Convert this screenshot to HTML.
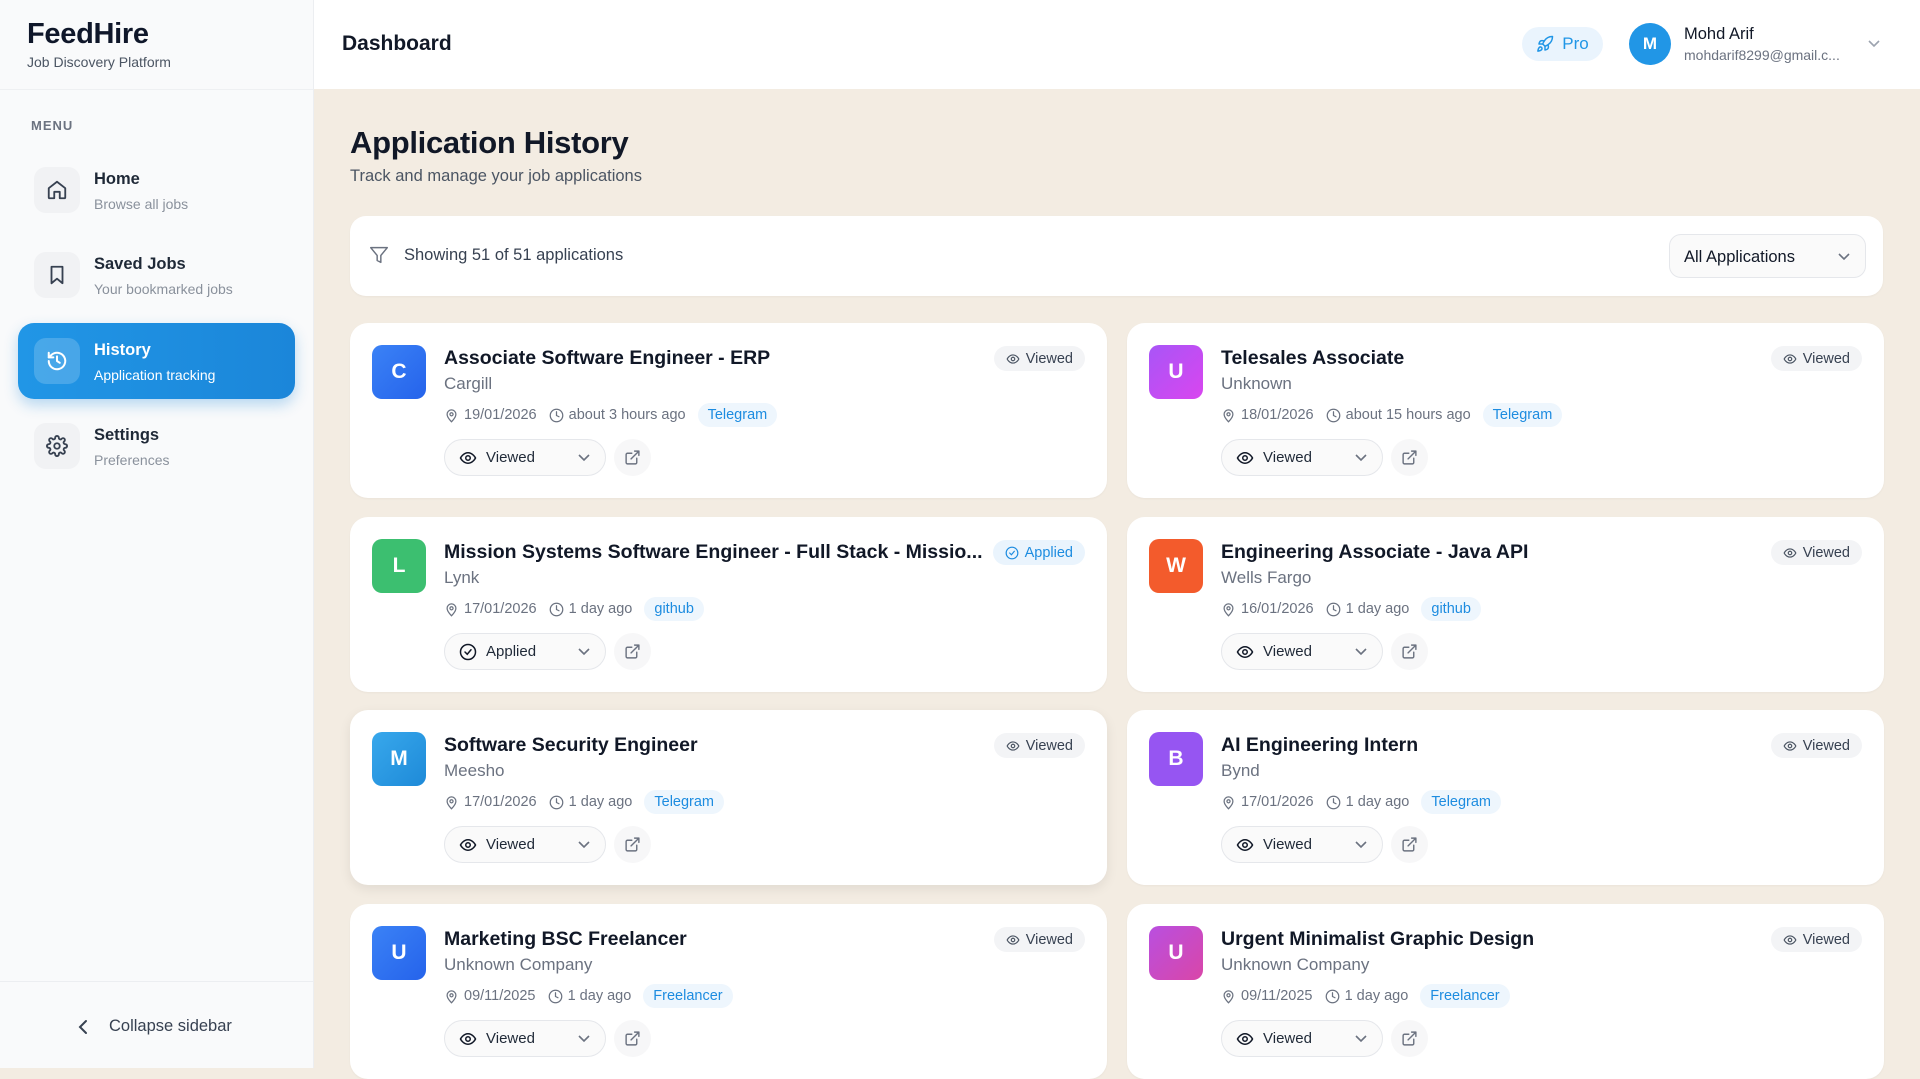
<!DOCTYPE html>
<html><head><meta charset="utf-8"><style>
*{box-sizing:border-box;margin:0;padding:0}
body{width:1920px;height:1068px;overflow:hidden;font-family:"Liberation Sans",sans-serif;background:#f3ece2;position:relative;color:#111827}
.sb{position:absolute;left:0;top:0;width:314px;height:1068px;background:#f9fafb;border-right:1px solid #eceef1}
.logo{position:absolute;left:27px;top:18px;font-size:29px;font-weight:700;color:#0f172a;letter-spacing:-0.3px}
.logosub{position:absolute;left:27px;top:54px;font-size:14px;color:#4b5563}
.sbline{position:absolute;left:0;top:89px;width:313px;border-top:1px solid #eef0f2}
.menu{position:absolute;left:31px;top:118px;font-size:13px;font-weight:700;color:#6b7280;letter-spacing:1px}
.nav{position:absolute;left:18px;width:277px;height:76px;border-radius:16px}
.nav .ic{position:absolute;left:16px;top:15px;width:46px;height:46px;border-radius:12px;background:#f1f2f4;display:flex;align-items:center;justify-content:center}
.nav .t{position:absolute;left:76px;top:18px;font-size:16.5px;font-weight:700;color:#1f2937}
.nav .s{position:absolute;left:76px;top:44px;font-size:14px;color:#8a919c}
.nav.act{background:linear-gradient(90deg,#2196e6,#1b86d9);box-shadow:0 6px 14px rgba(30,136,217,.3)}
.nav.act .ic{background:rgba(255,255,255,.18)}
.nav.act .t,.nav.act .s{color:#fff}
.coll{position:absolute;left:0;top:981px;width:313px;border-top:1px solid #eceef1;height:87px}
.coll span{position:absolute;left:109px;top:35px;font-size:16.5px;color:#374151}
.hdr{position:absolute;left:314px;top:0;width:1606px;height:89px;background:#fff}
.dash{position:absolute;left:28px;top:32px;font-size:21px;font-weight:700;color:#111827}
.pro{position:absolute;left:1208px;top:27px;width:81px;height:34px;border-radius:17px;background:#eaf4fd;color:#2196e6;font-size:17px;display:flex;align-items:center;justify-content:center;gap:8px}
.av{position:absolute;left:1315px;top:23px;width:42px;height:42px;border-radius:50%;background:#2196e6;color:#fff;font-weight:700;font-size:17px;display:flex;align-items:center;justify-content:center}
.nm{position:absolute;left:1370px;top:25px;font-size:16.5px;color:#111827}
.em{position:absolute;left:1370px;top:47px;font-size:14px;color:#6b7280}
h1{position:absolute;left:350px;top:125px;font-size:31px;font-weight:700;color:#111827;letter-spacing:-0.3px}
.sub{position:absolute;left:350px;top:167px;font-size:16.5px;color:#4b5563}
.fb{position:absolute;left:350px;top:216px;width:1533px;height:80px;background:#fff;border-radius:16px;box-shadow:0 1px 2px rgba(0,0,0,.04)}
.fb .txt{position:absolute;left:54px;top:30px;font-size:16.5px;color:#374151}
.dd{position:absolute;left:1319px;top:18px;width:197px;height:44px;border:1px solid #e5e7eb;border-radius:12px;background:#fafafa;font-size:16.5px;color:#111827;padding:13px 0 0 14px}
.card{position:absolute;width:757px;height:175px;background:#fff;border-radius:18px;box-shadow:0 1px 2px rgba(0,0,0,.04)}
.card .lg{position:absolute;left:22px;top:22px;width:54px;height:54px;border-radius:10px;color:#fff;font-weight:700;font-size:21px;display:flex;align-items:center;justify-content:center}
.card .ti{position:absolute;left:94px;top:24px;font-size:19.5px;font-weight:700;color:#111827;white-space:nowrap}
.card .co{position:absolute;left:94px;top:51px;font-size:17px;color:#6b7280}
.card .mt{position:absolute;left:94px;top:80px;font-size:14.5px;color:#6b7280;display:flex;align-items:center;height:24px;white-space:nowrap}
.mt svg{margin-right:5px}
.mt .tag{margin-left:12px;background:#eef6fd;color:#1d8ce0;border-radius:12px;padding:4px 10px;font-size:14.5px}
.card .bd{position:absolute;right:22px;top:23px;height:25px;border-radius:13px;background:#f3f4f6;color:#374151;font-size:14.5px;display:flex;align-items:center;padding:0 12px;gap:6px}
.card .bd.ap{background:#eaf4fd;color:#1d8ce0}
.card .st{position:absolute;left:94px;top:116px;width:162px;height:37px;border:1px solid #e5e7eb;border-radius:19px;background:#fafafa;font-size:15px;color:#1f2937;display:flex;align-items:center;padding-left:14px;gap:9px}
.st .chev{position:absolute;right:14px;top:13px}
.card .ex{position:absolute;left:264px;top:116px;width:37px;height:37px;border-radius:50%;background:#f7f7f8;display:flex;align-items:center;justify-content:center}
</style></head><body>
<div class="sb">
<div class="logo">FeedHire</div><div class="logosub">Job Discovery Platform</div>
<div class="sbline"></div>
<div class="menu">MENU</div>
<div class="nav" style="top:152px"><div class="ic"><svg width="22" height="22" viewBox="0 0 24 24" fill="none" stroke="#374151" stroke-width="2" stroke-linecap="round" stroke-linejoin="round"><path d="M3 10l9-7 9 7v10a1 1 0 0 1-1 1h-5v-7h-6v7H4a1 1 0 0 1-1-1z"/></svg></div><div class="t">Home</div><div class="s">Browse all jobs</div></div>
<div class="nav" style="top:237px"><div class="ic"><svg width="22" height="22" viewBox="0 0 24 24" fill="none" stroke="#374151" stroke-width="2" stroke-linejoin="round"><path d="M6 3h12v18l-6-5-6 5z"/></svg></div><div class="t">Saved Jobs</div><div class="s">Your bookmarked jobs</div></div>
<div class="nav act" style="top:323px"><div class="ic"><svg width="22" height="22" viewBox="0 0 24 24" fill="none" stroke="#fff" stroke-width="2.2" stroke-linecap="round" stroke-linejoin="round"><path d="M3 12a9 9 0 1 0 3-6.7L3 8"/><path d="M3 3v5h5"/><path d="M12 7v5l3 2"/></svg></div><div class="t">History</div><div class="s">Application tracking</div></div>
<div class="nav" style="top:408px"><div class="ic"><svg width="22" height="22" viewBox="0 0 24 24" fill="none" stroke="#374151" stroke-width="2"><circle cx="12" cy="12" r="3"/><path d="M19.4 15a1.7 1.7 0 0 0 .3 1.8l.1.1a2 2 0 1 1-2.8 2.8l-.1-.1a1.7 1.7 0 0 0-2.9 1.2V21a2 2 0 1 1-4 0v-.1a1.7 1.7 0 0 0-2.9-1.2l-.1.1a2 2 0 1 1-2.8-2.8l.1-.1A1.7 1.7 0 0 0 3 14H3a2 2 0 1 1 0-4h.1a1.7 1.7 0 0 0 1.2-2.9l-.1-.1a2 2 0 1 1 2.8-2.8l.1.1A1.7 1.7 0 0 0 10 3.1V3a2 2 0 1 1 4 0v.1a1.7 1.7 0 0 0 2.9 1.2l.1-.1a2 2 0 1 1 2.8 2.8l-.1.1a1.7 1.7 0 0 0 1.2 2.9H21a2 2 0 1 1 0 4h-.1a1.7 1.7 0 0 0-1.5 1z"/></svg></div><div class="t">Settings</div><div class="s">Preferences</div></div>
<div class="coll"><svg style="position:absolute;left:77px;top:37px" width="14" height="16" viewBox="0 0 14 16" fill="none" stroke="#374151" stroke-width="2" stroke-linecap="round"><path d="M9 2L3 8l6 6"/></svg><span>Collapse sidebar</span></div>
</div>
<div class="hdr">
<div class="dash">Dashboard</div>
<div class="pro"><svg width="18" height="18" viewBox="0 0 24 24" fill="none" stroke="#2196e6" stroke-width="2" stroke-linecap="round" stroke-linejoin="round"><path d="M4.5 16.5c-1.5 1.3-2 5-2 5s3.7-.5 5-2c.7-.8.7-2.1-.1-2.9a2.2 2.2 0 0 0-2.9-.1z"/><path d="M12 15l-3-3a22 22 0 0 1 2-4A12.9 12.9 0 0 1 22 2c0 2.7-.8 7.5-6 11a22 22 0 0 1-4 2z"/><path d="M9 12H4s.6-3 2-4c1.6-1.1 5 0 5 0M12 15v5s3-.6 4-2c1.1-1.6 0-5 0-5"/></svg>Pro</div>
<div class="av">M</div>
<div class="nm">Mohd Arif</div><div class="em">mohdarif8299@gmail.c...</div>
<svg style="position:absolute;left:1553px;top:39px" width="14" height="10" viewBox="0 0 14 10" fill="none" stroke="#9ca3af" stroke-width="1.6"><path d="M2 2l5 5 5-5"/></svg>
</div>
<h1>Application History</h1>
<div class="sub">Track and manage your job applications</div>
<div class="fb"><svg style="position:absolute;left:18px;top:28px" width="22" height="22" viewBox="0 0 24 24" fill="none" stroke="#6b7280" stroke-width="1.6" stroke-linejoin="round"><path d="M3 4h18l-7 8.5V20l-4-2v-5.5z"/></svg><div class="txt">Showing 51 of 51 applications</div>
<div class="dd">All Applications<svg style="position:absolute;right:14px;top:17px" width="14" height="10" viewBox="0 0 14 10" fill="none" stroke="#6b7280" stroke-width="1.6"><path d="M2 2l5 5 5-5"/></svg></div></div>

<svg width="0" height="0" style="position:absolute"><defs>
<symbol id="eye" viewBox="0 0 24 24"><g fill="none" stroke="currentColor" stroke-width="2"><path d="M2 12s3.5-7 10-7 10 7 10 7-3.5 7-10 7S2 12 2 12z"/><circle cx="12" cy="12" r="3"/></g></symbol>
<symbol id="chk" viewBox="0 0 24 24"><g fill="none" stroke="currentColor" stroke-width="2" stroke-linecap="round"><circle cx="12" cy="12" r="10"/><path d="M8 12l3 3 5-6"/></g></symbol>
<symbol id="pin" viewBox="0 0 24 24"><g fill="none" stroke="currentColor" stroke-width="2"><path d="M12 22s7-6.5 7-12a7 7 0 0 0-14 0c0 5.5 7 12 7 12z"/><circle cx="12" cy="10" r="2.5"/></g></symbol>
<symbol id="clk" viewBox="0 0 24 24"><g fill="none" stroke="currentColor" stroke-width="2" stroke-linecap="round"><circle cx="12" cy="12" r="10"/><path d="M12 6v6l4 2"/></g></symbol>
<symbol id="ext" viewBox="0 0 24 24"><g fill="none" stroke="currentColor" stroke-width="2" stroke-linecap="round" stroke-linejoin="round"><path d="M18 13v6a2 2 0 0 1-2 2H5a2 2 0 0 1-2-2V8a2 2 0 0 1 2-2h6"/><path d="M15 3h6v6M10 14L21 3"/></g></symbol>
<symbol id="chv" viewBox="0 0 14 10"><path d="M2 2l5 5 5-5" fill="none" stroke="currentColor" stroke-width="1.6"/></symbol>
</defs></svg>

<!-- cards -->
<div class="card" style="left:350px;top:323px"><div class="lg" style="background:linear-gradient(135deg,#3b82f6,#2563eb)">C</div><div class="ti">Associate Software Engineer - ERP</div><div class="co">Cargill</div><div class="mt"><svg width="15" height="15" color="#6b7280"><use href="#pin"/></svg>19/01/2026&nbsp;&nbsp;&nbsp;<svg width="15" height="15" color="#6b7280"><use href="#clk"/></svg>about 3 hours ago<span class="tag">Telegram</span></div><div class="bd"><svg width="14" height="14" color="#4b5563"><use href="#eye"/></svg>Viewed</div><div class="st"><svg width="18" height="18" color="#111827"><use href="#eye"/></svg>Viewed<svg class="chev" width="14" height="10" color="#6b7280"><use href="#chv"/></svg></div><div class="ex"><svg width="17" height="17" color="#6b7280"><use href="#ext"/></svg></div></div>

<div class="card" style="left:1127px;top:323px"><div class="lg" style="background:linear-gradient(135deg,#a855f7,#d946ef)">U</div><div class="ti">Telesales Associate</div><div class="co">Unknown</div><div class="mt"><svg width="15" height="15" color="#6b7280"><use href="#pin"/></svg>18/01/2026&nbsp;&nbsp;&nbsp;<svg width="15" height="15" color="#6b7280"><use href="#clk"/></svg>about 15 hours ago<span class="tag">Telegram</span></div><div class="bd"><svg width="14" height="14" color="#4b5563"><use href="#eye"/></svg>Viewed</div><div class="st"><svg width="18" height="18" color="#111827"><use href="#eye"/></svg>Viewed<svg class="chev" width="14" height="10" color="#6b7280"><use href="#chv"/></svg></div><div class="ex"><svg width="17" height="17" color="#6b7280"><use href="#ext"/></svg></div></div>

<div class="card" style="left:350px;top:517px"><div class="lg" style="background:#3cbf70">L</div><div class="ti">Mission Systems Software Engineer - Full Stack - Missio...</div><div class="co">Lynk</div><div class="mt"><svg width="15" height="15" color="#6b7280"><use href="#pin"/></svg>17/01/2026&nbsp;&nbsp;&nbsp;<svg width="15" height="15" color="#6b7280"><use href="#clk"/></svg>1 day ago<span class="tag">github</span></div><div class="bd ap"><svg width="14" height="14" color="#1d8ce0"><use href="#chk"/></svg>Applied</div><div class="st"><svg width="18" height="18" color="#111827"><use href="#chk"/></svg>Applied<svg class="chev" width="14" height="10" color="#6b7280"><use href="#chv"/></svg></div><div class="ex"><svg width="17" height="17" color="#6b7280"><use href="#ext"/></svg></div></div>

<div class="card" style="left:1127px;top:517px"><div class="lg" style="background:#f35b2c">W</div><div class="ti">Engineering Associate - Java API</div><div class="co">Wells Fargo</div><div class="mt"><svg width="15" height="15" color="#6b7280"><use href="#pin"/></svg>16/01/2026&nbsp;&nbsp;&nbsp;<svg width="15" height="15" color="#6b7280"><use href="#clk"/></svg>1 day ago<span class="tag">github</span></div><div class="bd"><svg width="14" height="14" color="#4b5563"><use href="#eye"/></svg>Viewed</div><div class="st"><svg width="18" height="18" color="#111827"><use href="#eye"/></svg>Viewed<svg class="chev" width="14" height="10" color="#6b7280"><use href="#chv"/></svg></div><div class="ex"><svg width="17" height="17" color="#6b7280"><use href="#ext"/></svg></div></div>

<div class="card" style="left:350px;top:710px;box-shadow:0 4px 12px rgba(0,0,0,.08)"><div class="lg" style="background:linear-gradient(135deg,#38a8ec,#1e8ad8)">M</div><div class="ti">Software Security Engineer</div><div class="co">Meesho</div><div class="mt"><svg width="15" height="15" color="#6b7280"><use href="#pin"/></svg>17/01/2026&nbsp;&nbsp;&nbsp;<svg width="15" height="15" color="#6b7280"><use href="#clk"/></svg>1 day ago<span class="tag">Telegram</span></div><div class="bd"><svg width="14" height="14" color="#4b5563"><use href="#eye"/></svg>Viewed</div><div class="st"><svg width="18" height="18" color="#111827"><use href="#eye"/></svg>Viewed<svg class="chev" width="14" height="10" color="#6b7280"><use href="#chv"/></svg></div><div class="ex"><svg width="17" height="17" color="#6b7280"><use href="#ext"/></svg></div></div>

<div class="card" style="left:1127px;top:710px"><div class="lg" style="background:#9655f2">B</div><div class="ti">AI Engineering Intern</div><div class="co">Bynd</div><div class="mt"><svg width="15" height="15" color="#6b7280"><use href="#pin"/></svg>17/01/2026&nbsp;&nbsp;&nbsp;<svg width="15" height="15" color="#6b7280"><use href="#clk"/></svg>1 day ago<span class="tag">Telegram</span></div><div class="bd"><svg width="14" height="14" color="#4b5563"><use href="#eye"/></svg>Viewed</div><div class="st"><svg width="18" height="18" color="#111827"><use href="#eye"/></svg>Viewed<svg class="chev" width="14" height="10" color="#6b7280"><use href="#chv"/></svg></div><div class="ex"><svg width="17" height="17" color="#6b7280"><use href="#ext"/></svg></div></div>

<div class="card" style="left:350px;top:904px"><div class="lg" style="background:linear-gradient(135deg,#3b82f6,#2563eb)">U</div><div class="ti">Marketing BSC Freelancer</div><div class="co">Unknown Company</div><div class="mt"><svg width="15" height="15" color="#6b7280"><use href="#pin"/></svg>09/11/2025&nbsp;&nbsp;&nbsp;<svg width="15" height="15" color="#6b7280"><use href="#clk"/></svg>1 day ago<span class="tag">Freelancer</span></div><div class="bd"><svg width="14" height="14" color="#4b5563"><use href="#eye"/></svg>Viewed</div><div class="st"><svg width="18" height="18" color="#111827"><use href="#eye"/></svg>Viewed<svg class="chev" width="14" height="10" color="#6b7280"><use href="#chv"/></svg></div><div class="ex"><svg width="17" height="17" color="#6b7280"><use href="#ext"/></svg></div></div>

<div class="card" style="left:1127px;top:904px"><div class="lg" style="background:linear-gradient(135deg,#b94fe0,#d946a8)">U</div><div class="ti">Urgent Minimalist Graphic Design</div><div class="co">Unknown Company</div><div class="mt"><svg width="15" height="15" color="#6b7280"><use href="#pin"/></svg>09/11/2025&nbsp;&nbsp;&nbsp;<svg width="15" height="15" color="#6b7280"><use href="#clk"/></svg>1 day ago<span class="tag">Freelancer</span></div><div class="bd"><svg width="14" height="14" color="#4b5563"><use href="#eye"/></svg>Viewed</div><div class="st"><svg width="18" height="18" color="#111827"><use href="#eye"/></svg>Viewed<svg class="chev" width="14" height="10" color="#6b7280"><use href="#chv"/></svg></div><div class="ex"><svg width="17" height="17" color="#6b7280"><use href="#ext"/></svg></div></div>
</body></html>
